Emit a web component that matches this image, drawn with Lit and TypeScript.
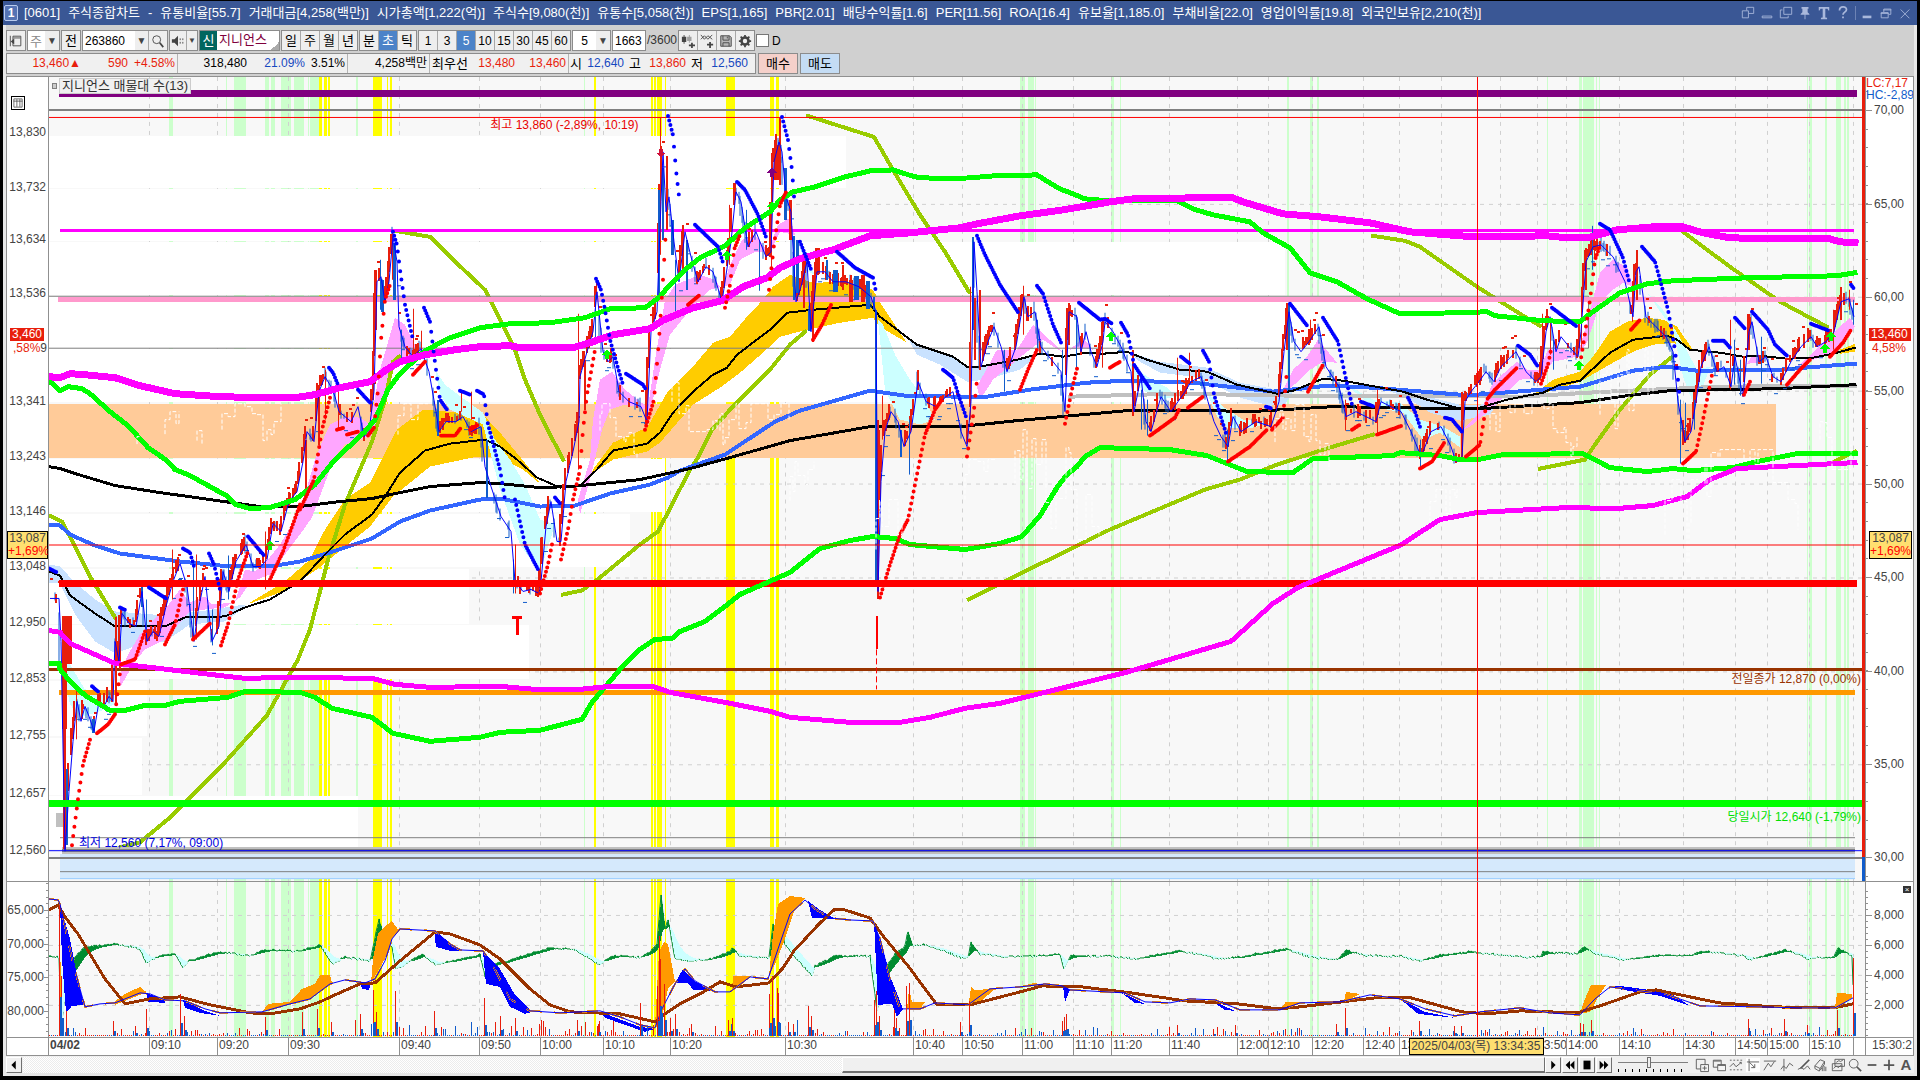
import { LitElement, html, svg, css } from "lit";
import { customElement, property } from "lit/decorators.js";

type Pt = [number, number];

/** Parses "x,y x,y ..." into points. */
const pts = (s: string): Pt[] =>
  s.trim().split(/\s+/).map((p) => p.split(",").map(Number) as Pt);

/** Linear interpolation of a point list at x. */
const at = (p: Pt[], x: number): number => {
  if (x <= p[0][0]) return p[0][1];
  for (let i = 1; i < p.length; i++) {
    if (x <= p[i][0]) {
      const [x0, y0] = p[i - 1];
      const [x1, y1] = p[i];
      return x1 === x0 ? y1 : y0 + ((y1 - y0) * (x - x0)) / (x1 - x0);
    }
  }
  return p[p.length - 1][1];
};

/** Small deterministic generator for tick noise. */
const rng = (seed: number) => () => {
  seed = (seed * 1664525 + 1013904223) % 4294967296;
  return seed / 4294967296;
};

const GREEN_BANDS: Pt[] = [
  [169, 4], [226, 1], [234, 12], [265, 4], [271, 4], [281, 10], [294, 10], [308, 1], [310, 9], [356, 2], [584, 1],
  [1020, 5], [1028, 6], [1035, 1], [1111, 3], [1120, 1], [1287, 2], [1310, 3], [1317, 2], [1547, 1], [1579, 3],
  [1583, 11], [1596, 1], [1599, 1], [1807, 1], [1809, 3], [1825, 2], [1836, 5], [1844, 2], [1847, 2],
];
const YELLOW_BANDS: Pt[] = [
  [319, 3], [324, 3], [328, 2], [373, 9], [387, 1], [390, 2], [594, 2], [651, 2], [654, 2], [657, 5], [665, 1],
  [726, 9], [770, 4], [776, 3],
];
const GRID_X = [
  149, 217, 288, 399, 479, 540, 603, 670, 785, 913, 962, 1022, 1073, 1111, 1169, 1237, 1268, 1312, 1363, 1399, 1441,
  1500, 1537, 1566, 1619, 1683, 1735, 1767, 1809, 1853,
];
const GRID_Y = [110, 204, 297, 391, 484, 578, 672, 765, 858];

/** Volume-at-price bars: top, bottom, right edge. */
const PROFILE = [
  [136, 188, 846], [189, 241, 793], [242, 295, 1285], [296, 348, 1588], [349, 402, 1240], [459, 512, 665],
  [514, 568, 630], [570, 625, 469], [626, 680, 529], [682, 737, 147], [739, 796, 142], [797, 850, 358],
];

const MA_TOP_MAGENTA =
  "49,377 60,378 70,374 85,375 115,378 140,386 175,394 220,397 260,398 295,398 315,395 340,388 370,382 385,371 400,362 425,355 455,350 480,347 510,346 520,348 573,348 593,342 613,335 650,329 662,321 693,308 722,301 743,287 767,278 780,268 800,259 833,250 870,236 910,233 960,228 977,224 1020,216 1063,210 1110,202 1133,199 1193,198 1233,198 1243,202 1283,214 1320,217 1370,223 1410,232 1460,236 1477,237 1547,236 1567,238 1587,238 1617,230 1653,227 1683,227 1703,233 1730,238 1780,239 1830,239 1840,242 1855,243";
const MA_TOP_GREEN =
  "49,381 60,391 68,387 82,389 90,394 110,412 128,426 148,448 167,461 175,470 190,476 228,497 236,505 250,509 270,508 295,500 315,485 335,460 365,432 375,420 388,390 400,374 425,351 450,338 480,328 510,324 550,323 585,318 610,309 645,308 660,297 668,287 685,270 700,258 725,246 745,228 770,212 780,200 793,192 815,187 845,177 870,171 893,170 915,177 940,179 970,178 993,176 1037,175 1048,182 1060,189 1073,194 1085,199 1110,201 1177,201 1193,209 1213,215 1250,222 1263,233 1290,248 1310,273 1337,282 1367,299 1400,314 1460,313 1487,312 1495,316 1543,321 1580,322 1590,314 1620,293 1647,284 1673,281 1747,278 1837,276 1855,273";
const MA_LOW_GREEN =
  "49,664 59,664 60,670 70,682 85,696 110,711 125,711 145,706 165,706 180,702 228,698 245,692 300,693 315,698 332,709 372,718 393,734 430,742 480,738 500,733 540,731 582,720 592,703 620,670 640,650 655,640 672,639 680,632 705,622 725,607 740,595 790,573 820,549 850,541 873,537 895,539 910,545 965,550 1000,544 1022,537 1040,516 1057,488 1067,475 1077,467 1085,457 1100,448 1170,450 1207,456 1247,472 1293,473 1313,459 1393,456 1400,453 1440,456 1460,460 1478,460 1503,455 1583,454 1610,468 1647,472 1673,469 1693,471 1733,468 1757,462 1797,454 1855,454";
const MA_LOW_MAGENTA =
  "49,631 60,633 70,644 115,664 150,668 210,675 245,679 290,678 372,679 395,685 430,688 500,687 535,690 580,690 610,687 653,687 670,693 725,703 770,712 790,718 850,723 900,723 930,718 965,709 1000,704 1053,691 1126,673 1231,642 1273,604 1298,588 1402,545 1426,529 1440,520 1477,513 1567,508 1617,509 1653,506 1687,497 1710,480 1737,469 1855,463";
const MA_BLUE =
  "49,525 60,526 70,535 95,546 120,554 180,562 230,567 270,567 300,562 330,553 372,539 400,522 430,511 480,500 500,499 540,507 575,506 610,494 650,485 668,478 680,471 725,455 775,422 800,411 870,391 905,396 960,397 987,397 1030,390 1087,383 1127,381 1193,383 1273,392 1327,386 1373,388 1460,395 1477,395 1580,387 1600,381 1633,371 1667,367 1697,371 1780,370 1855,364";
const MA_BLACK =
  "49,467 60,469 75,474 115,486 160,493 210,500 260,507 300,507 340,502 372,499 400,493 430,487 480,483 500,484 540,488 570,487 640,480 690,469 730,458 790,441 870,427 960,427 1017,421 1127,411 1213,411 1250,412 1333,407 1460,409 1480,409 1580,403 1627,396 1670,391 1780,389 1855,385";
const MA_GRAY = "1070,397 1177,394 1293,396 1440,396 1520,397 1607,392 1720,387 1855,386";
const MA_FAST_BLACK =
  "49,572 60,576 70,596 95,614 115,627 165,627 185,618 225,617 245,608 270,600 300,582 325,555 345,535 372,515 385,497 400,473 425,451 450,444 485,440 500,447 517,460 537,478 560,488 580,486 597,470 613,451 647,444 660,433 673,413 693,392 713,375 727,368 737,355 770,330 787,313 813,310 870,305 880,317 917,345 953,357 967,367 980,367 1017,360 1040,354 1063,357 1087,353 1103,354 1127,352 1147,360 1180,370 1207,372 1237,385 1277,394 1293,391 1323,379 1343,381 1403,392 1427,400 1460,409 1480,408 1507,400 1543,393 1560,385 1580,381 1610,353 1633,340 1667,336 1677,340 1690,350 1720,353 1743,357 1760,356 1787,359 1813,358 1833,354 1855,348";

const OLIVE = [
  "49,516 62,522 75,547 90,577 115,618",
  "120,848 140,843 168,820 225,763 267,716 298,660 310,630 320,592 328,560 345,505 372,442 385,400 393,362 399,357",
  "395,231 430,237 450,257 485,290 500,320 515,350 525,380 540,415 563,460",
  "563,595 582,591 600,578 640,545 658,532 672,505 690,470 698,458 712,430 730,410 750,390 770,370 790,345 805,332",
  "808,116 874,137 893,170 920,215 945,252 969,292",
  "969,600 1041,564 1110,530 1205,490 1240,480 1277,465 1333,447 1373,435",
  "1373,236 1405,241 1420,247 1477,287 1520,314 1540,326",
  "1540,469 1585,460 1595,445 1620,410 1650,375 1671,358",
  "1683,232 1730,267 1780,302 1827,327",
  "1830,464 1855,452",
];

const CLOUDS: [string, string][] = [
  ["cloud-blue", "49,565 60,567 75,583 95,600 115,612 165,616 200,612 245,605 245,608 225,622 190,625 165,642 140,645 115,654 95,642 75,615 60,584 49,583"],
  ["cloud-gold", "250,603 285,582 310,560 325,530 345,500 370,483 383,457 397,430 423,410 460,413 483,415 500,433 528,467 540,484 523,470 500,458 477,457 430,467 393,497 370,527 350,543 317,570 283,592 250,604"],
  ["cloud-gold", "585,483 595,467 613,443 647,428 667,393 693,367 713,343 730,337 747,317 763,300 773,287 790,275 813,283 847,282 873,290 880,303 907,343 880,327 873,318 840,323 807,330 780,337 763,353 740,373 720,388 693,405 660,443 647,452 613,460 595,472"],
  ["cloud-blue", "907,337 917,345 953,357 967,367 980,367 1017,360 1040,354 1020,370 985,380 967,382 940,365 917,355"],
  ["cloud-blue", "1127,352 1160,362 1207,368 1240,383 1277,390 1295,388 1285,405 1270,406 1240,398 1200,378 1160,373 1140,362"],
  ["cloud-blue", "1380,387 1420,395 1460,405 1480,405 1500,400 1490,415 1460,421 1430,413 1410,400"],
  ["cloud-gold", "1533,395 1553,380 1580,372 1593,357 1610,332 1627,322 1647,318 1663,320 1677,327 1693,350 1673,343 1653,345 1633,352 1613,363 1580,382 1553,391"],
  ["cloud-gold", "1840,350 1855,344 1855,352 1840,354"],
  ["cloud-pink", "120,675 128,655 140,635 152,622 165,610 180,590 190,603 205,597 212,605 235,603 245,570 255,572 268,560 280,545 300,512 315,460 323,440 330,425 345,417 360,418 370,425 380,370 395,318 405,325 415,345 425,350 425,358 400,357 390,378 375,430 370,437 345,445 335,457 325,483 312,518 300,535 290,548 270,575 250,583 240,598 225,608 205,610 190,612 165,640 145,650 135,662 120,688"],
  ["cloud-pink", "578,500 590,460 593,420 600,380 612,372 625,390 648,408 655,360 665,300 675,285 700,275 715,280 722,290 730,265 742,240 755,235 768,252 778,225 790,218 795,235 780,232 770,252 755,252 740,260 730,285 710,290 690,310 670,335 660,370 650,412 640,408 625,405 610,410 602,430 590,480 580,515"],
  ["cloud-pink", "977,387 997,350 1017,350 1033,325 1053,343 1063,353 1043,340 1027,352 993,380 980,400"],
  ["cloud-pink", "1070,350 1083,338 1093,350 1083,348"],
  ["cloud-pink", "1283,390 1293,370 1307,357 1318,340 1337,363 1323,362 1310,370 1287,392"],
  ["cloud-pink", "1463,430 1480,413 1493,383 1517,362 1527,370 1540,370 1548,350 1553,347 1578,353 1583,337 1600,273 1613,260 1627,267 1633,287 1623,283 1613,290 1600,303 1587,343 1577,357 1553,362 1540,378 1520,380 1493,408 1470,427"],
  ["cloud-pink", "1747,364 1753,355 1762,363"],
  ["cloud-pink", "1797,367 1813,353 1833,333 1850,318 1855,327 1837,352 1813,360"],
  ["cloud-cyan", "62,660 70,665 85,690 110,695 115,705 100,712 80,718 70,705 65,680"],
  ["cloud-cyan", "435,370 445,385 465,400 483,413 495,440 510,460 525,485 540,520 555,525 540,573 520,545 500,490 483,425 450,410 440,395"],
  ["cloud-cyan", "878,320 883,325 895,355 910,380 925,400 935,420 920,425 900,420 885,390"],
  ["cloud-cyan", "800,245 815,275 805,270"],
  ["cloud-cyan", "1130,363 1147,377 1167,388 1177,397 1160,400 1147,393 1133,383"],
  ["cloud-cyan", "1207,393 1223,407 1243,420 1270,423 1253,428 1227,428 1217,417"],
  ["cloud-cyan", "1343,383 1373,400 1400,403 1420,420 1443,427 1460,437 1460,448 1440,433 1423,440 1403,413 1373,407"],
  ["cloud-cyan", "1647,293 1663,310 1677,333 1697,370 1710,367 1703,387 1693,403 1683,377 1673,330"],
];

const PRICE = pts(
  "49,597 58,597 60,640 64,850 68,790 72,740 76,700 80,720 84,705 88,715 93,730 98,700 103,705 108,695 112,700 114,640 118,660 121,612 128,622 135,625 141,590 146,640 152,630 158,635 165,605 172,580 179,562 186,585 193,640 197,610 204,575 211,640 218,625 222,570 228,590 235,560 245,543 252,565 260,565 266,558 272,522 280,530 288,500 296,490 302,460 306,430 313,440 318,390 324,375 330,385 334,395 338,410 344,415 350,420 357,405 363,435 368,430 373,390 376,280 380,275 384,300 388,280 392,235 396,260 398,325 404,345 412,355 420,347 428,370 435,410 438,430 445,420 455,420 462,415 470,430 480,425 484,465 490,485 500,515 510,530 514,580 522,590 530,588 538,592 540,580 545,525 550,500 556,540 560,540 565,480 572,450 578,420 579,375 586,350 592,330 596,290 602,350 607,360 612,355 618,390 628,400 640,405 646,420 650,330 656,310 660,200 662,150 665,210 668,195 673,240 678,280 684,230 690,255 697,280 705,265 712,270 721,300 730,240 735,190 740,200 747,245 755,230 765,255 770,250 773,160 778,140 781,150 785,195 790,210 795,300 800,285 806,260 810,330 816,270 824,270 832,280 845,280 858,285 870,295 875,310 877,590 880,480 884,430 890,410 897,420 903,445 910,430 917,380 925,400 935,405 945,395 952,390 960,430 966,445 970,400 973,240 976,290 980,365 987,340 993,325 1000,345 1006,370 1015,345 1023,295 1027,315 1034,310 1040,345 1048,355 1060,370 1064,410 1068,310 1076,315 1080,350 1085,330 1090,350 1096,365 1102,340 1104,320 1112,330 1120,345 1130,370 1133,410 1140,375 1145,420 1150,430 1160,395 1170,410 1177,400 1184,390 1190,380 1200,375 1207,400 1213,420 1220,435 1227,445 1232,415 1240,430 1255,420 1270,425 1278,400 1283,350 1288,310 1293,340 1300,350 1308,340 1318,325 1325,365 1338,385 1345,415 1355,410 1365,415 1375,420 1380,400 1390,405 1400,410 1410,430 1420,455 1430,430 1440,425 1450,445 1455,460 1461,455 1464,400 1470,390 1478,380 1485,370 1493,380 1500,365 1515,350 1525,370 1535,380 1540,375 1545,330 1549,315 1555,350 1560,335 1568,345 1577,355 1580,330 1585,260 1592,245 1600,243 1612,255 1624,280 1632,315 1635,270 1638,265 1645,315 1655,325 1665,335 1672,350 1677,400 1684,440 1690,430 1695,400 1700,365 1708,345 1716,370 1723,365 1730,385 1734,355 1742,395 1748,330 1751,320 1758,360 1765,355 1772,375 1780,380 1790,360 1800,345 1810,335 1816,345 1825,340 1833,330 1840,300 1848,297 1853,315",
);

/** Single long wicks: x, top, bottom, rising (1) or falling (0), width. */
const WICKS = [
  [66, 617, 665, 1, 10], [64, 620, 730, 1, 5], [64, 700, 850, 1, 3], [66, 770, 846, 0, 2], [76, 688, 740, 1, 1],
  [93, 720, 734, 0, 3], [115, 618, 705, 1, 2], [119, 640, 670, 1, 2], [141, 583, 608, 0, 2], [146, 600, 640, 0, 1],
  [172, 550, 600, 1, 1], [193, 560, 640, 0, 1], [196, 555, 640, 1, 1], [212, 610, 646, 0, 1], [228, 556, 600, 0, 1],
  [265, 532, 590, 1, 1], [305, 440, 490, 1, 2], [318, 385, 445, 1, 2], [325, 370, 420, 1, 1], [338, 390, 430, 1, 1],
  [375, 270, 330, 1, 3], [380, 260, 310, 0, 1], [382, 280, 312, 0, 3], [392, 232, 280, 1, 1], [394, 243, 300, 0, 3],
  [401, 330, 364, 0, 1], [413, 309, 355, 1, 1], [421, 331, 350, 1, 1], [461, 390, 412, 1, 1], [437, 400, 436, 0, 2],
  [471, 392, 420, 1, 1], [486, 440, 498, 0, 2], [513, 560, 594, 0, 1], [515, 545, 594, 1, 1], [540, 538, 594, 1, 1],
  [578, 314, 470, 1, 1], [584, 360, 410, 1, 2], [596, 279, 300, 1, 1], [595, 295, 340, 0, 1], [647, 391, 420, 1, 1],
  [658, 190, 300, 0, 2], [660, 118, 255, 1, 1], [662, 168, 240, 0, 2], [666, 156, 230, 1, 2], [672, 220, 255, 0, 3],
  [682, 225, 270, 1, 2], [686, 240, 290, 0, 2], [675, 260, 313, 0, 1], [729, 205, 265, 1, 1], [734, 183, 200, 1, 3],
  [746, 210, 250, 0, 1], [759, 240, 291, 0, 1], [771, 160, 275, 1, 1], [776, 145, 180, 1, 6], [779, 118, 185, 1, 2],
  [785, 168, 220, 0, 3], [790, 200, 240, 1, 3], [793, 236, 300, 0, 2], [797, 240, 293, 0, 3], [803, 265, 308, 1, 2],
  [809, 310, 331, 0, 3], [812, 275, 342, 1, 2], [817, 248, 274, 1, 5], [826, 260, 280, 0, 2], [835, 270, 292, 0, 5],
  [842, 265, 290, 1, 2], [850, 280, 302, 1, 4], [856, 276, 300, 0, 5], [862, 275, 302, 1, 4], [867, 281, 309, 0, 4],
  [873, 297, 310, 0, 2], [875, 310, 585, 0, 2], [877, 420, 600, 1, 2], [878, 430, 500, 1, 2], [882, 396, 440, 1, 1],
  [900, 430, 457, 0, 2], [917, 370, 390, 1, 2], [909, 420, 475, 0, 1], [970, 287, 420, 1, 1], [972, 237, 330, 0, 2],
  [974, 298, 360, 1, 2], [979, 290, 370, 1, 2], [1004, 350, 392, 0, 1], [1023, 286, 335, 1, 1], [1037, 320, 352, 0, 1],
  [1062, 350, 402, 0, 1], [1068, 303, 345, 1, 2], [1076, 315, 370, 0, 1], [1102, 320, 368, 1, 1], [1132, 350, 413, 1, 2],
  [1141, 390, 430, 0, 1], [1147, 400, 436, 0, 1], [1189, 353, 380, 1, 1], [1177, 358, 400, 1, 1], [1227, 430, 465, 0, 1],
  [1286, 303, 350, 1, 2], [1288, 303, 390, 0, 2], [1310, 320, 340, 1, 1], [1345, 400, 431, 1, 1], [1377, 390, 436, 1, 1],
  [1420, 440, 468, 0, 1], [1461, 392, 460, 1, 2], [1542, 314, 375, 1, 1], [1550, 320, 355, 1, 1], [1553, 340, 370, 0, 1],
  [1581, 287, 350, 1, 1], [1585, 248, 290, 1, 2], [1592, 226, 270, 0, 1], [1594, 232, 258, 1, 1], [1632, 290, 322, 1, 1],
  [1636, 250, 300, 1, 2], [1680, 400, 464, 0, 1], [1682, 420, 445, 1, 2], [1685, 403, 440, 0, 1], [1694, 400, 430, 0, 1],
  [1730, 320, 390, 1, 1], [1734, 340, 385, 0, 1], [1740, 360, 396, 0, 1], [1748, 314, 350, 1, 3], [1761, 337, 384, 0, 1],
  [1833, 310, 350, 1, 1], [1840, 287, 320, 1, 2], [1849, 290, 310, 1, 1], [1853, 300, 325, 0, 1],
];

const SAR_RED = [
  "72,846 78,800 83,765 91,737", "97,734 108,725 115,715 121,665 135,660 145,632", "165,645 175,625 183,590",
  "193,640 210,624", "221,646 228,625 238,580 248,552", "270,580 283,552 300,505", "300,510 314,480 318,455 322,430 330,398",
  "337,430 344,428", "347,435 358,432", "368,436 374,428 378,390 381,340 385,300 390,285", "413,375 425,362",
  "441,436 455,436 461,428", "470,430 478,425", "540,594 548,565 553,540", "561,560 568,530 573,500 580,470 583,430 587,395 595,350",
  "645,430 654,400 659,340 663,280 666,230", "688,305 700,295", "725,308 730,285 734,250 740,235",
  "769,290 774,245 780,205 787,190", "813,340 822,325 832,303", "880,598 890,565 900,535 908,520 918,470 925,435 935,410 942,400",
  "967,457 974,410 977,380", "1020,390 1028,370 1037,350", "1065,424 1073,385 1078,365", "1110,368 1120,362",
  "1150,436 1175,418 1180,408", "1188,408 1203,397", "1228,462 1250,447 1267,430", "1272,430 1283,418 1287,370",
  "1308,392 1323,365", "1352,430 1360,425", "1377,435 1402,426", "1420,469 1432,462 1445,442",
  "1466,457 1480,445 1487,400 1495,390 1517,368", "1541,384 1548,365 1551,350", "1580,365 1584,340 1590,300 1595,260 1600,246",
  "1631,330 1640,320", "1683,464 1696,452 1703,420 1712,375", "1744,395 1751,380", "1787,385 1800,370 1810,360",
  "1830,357 1843,343 1851,330",
];
const SAR_BLUE = [
  "49,569 57,573", "92,687 99,693", "120,608 126,611", "149,588 166,599", "183,549 190,553 194,567", "209,554 214,565 220,590",
  "248,537 264,556", "329,368 333,373 338,385", "358,390 371,404", "393,232 397,245 400,270 405,305 413,340",
  "424,308 430,322 434,355 440,400 447,410", "460,391 470,395", "477,391 484,395 488,425 500,470 505,500",
  "515,500 525,545 538,570", "555,498 560,504", "596,279 601,290 605,310 610,340 617,365 623,385", "626,374 643,385 646,390",
  "668,116 673,135 676,170 680,205", "695,225 718,247 723,263", "737,182 745,190 758,215 767,240",
  "782,117 788,140 792,170 795,210", "800,242 812,272", "837,252 855,268 873,278 876,292", "943,370 953,378 960,400 967,420",
  "977,236 985,255 1000,285 1019,314", "1037,286 1043,294 1053,325 1062,345", "1079,303 1100,320 1105,319 1112,324",
  "1121,323 1128,335 1134,365 1150,389", "1181,357 1190,364", "1203,351 1209,362 1214,395 1227,437", "1266,407 1272,409",
  "1290,304 1308,327", "1323,318 1338,342 1345,375 1352,405", "1361,402 1374,407", "1408,398 1415,412 1421,430",
  "1445,418 1452,420 1462,432", "1518,346 1530,355 1538,367", "1552,308 1577,327", "1600,224 1610,230 1623,258 1630,285",
  "1642,247 1655,262 1660,280 1668,310 1675,350 1680,400", "1713,341 1724,341 1730,348", "1735,318 1745,329",
  "1752,312 1768,330 1775,345 1788,357", "1811,324 1829,331", "1851,285 1854,289",
];

const dots = (segments: string[]) =>
  segments
    .map((s) => {
      const p = pts(s);
      let d = "";
      for (let x = p[0][0]; x <= p[p.length - 1][0]; x += 1.2) d += `M${x.toFixed(1)} ${at(p, x).toFixed(1)}h0`;
      return d;
    })
    .join("");

const candles = () => {
  const r = rng(7);
  let up = "";
  let down = "";
  for (let x = 50; x < 1855; x += 1.5) {
    const y = at(PRICE, x);
    const slope = at(PRICE, x + 1.5) - y;
    const rise = slope + (r() - 0.5) * 5 < 0.4;
    const a = Math.min(y, y + slope) - 1 - r() * 7;
    const b = Math.max(y, y + slope) + 1 + r() * 6;
    const seg = `M${Math.round(x)} ${Math.round(a)}V${Math.round(b)}`;
    const keep = r();
    if (rise && keep < 0.75) up += seg;
    else if (!rise && keep < 0.5) down += seg;
    if (r() < 0.12) up += `M${Math.round(x)} ${Math.round(y - 8 - r() * 10)}h3`;
    if (r() < 0.12) down += `M${Math.round(x)} ${Math.round(y + 8 + r() * 10)}h4`;
  }
  return { up, down };
};

/** Faint dashed volume trace shown over the filled profile bar. */
const whiteTrace = (from: number, to: number, lo: number, hi: number, seed: number) => {
  const r = rng(seed);
  let y = (lo + hi) / 2;
  let d = `M${from} ${y}`;
  for (let x = from; x < to; x += 2 + Math.round(r() * 6)) {
    y = Math.max(lo, Math.min(hi, y + (r() - 0.5) * (hi - lo) * 1.2));
    d += `H${x}V${Math.round(y)}`;
  }
  return d;
};
const TRACES = [
  [137, 144, 432, 457, 1], [165, 184, 412, 457, 2], [197, 206, 425, 457, 3], [222, 284, 404, 456, 4], [398, 432, 404, 466, 5],
  [600, 640, 404, 458, 8], [672, 720, 372, 432, 6], [720, 795, 404, 458, 9], [790, 816, 462, 540, 10], [876, 912, 500, 600, 11],
  [965, 1000, 460, 540, 12], [1015, 1110, 430, 540, 13], [1275, 1330, 405, 480, 14], [1430, 1465, 490, 555, 15],
  [1490, 1580, 404, 457, 16], [1600, 1660, 350, 480, 17], [1665, 1700, 480, 590, 18], [1705, 1800, 450, 530, 19],
  [1820, 1852, 410, 470, 20],
];

const LOWER_BROWN =
  "49,911 58,906 65,918 78,935 90,955 105,980 125,1005 150,1000 180,998 210,1006 250,1014 270,1015 300,1010 320,1003 335,996 360,985 375,984 400,962 435,933 450,935 480,946 500,960 530,990 550,1006 570,1013 620,1015 655,1023 665,1015 680,1005 700,995 720,983 736,988 769,984 783,969 794,952 819,925 834,911 845,911 870,919 883,937 908,967 937,1006 970,1006 1024,992 1042,987 1082,988 1131,994 1185,1002 1238,1005 1278,1010 1300,1008 1375,999 1411,999 1462,1013 1486,1015 1521,1012 1577,1014 1600,1007 1640,993 1656,991 1719,1004 1774,1008 1834,1009 1853,1005";
const LOWER_BLUE =
  "49,900 58,901 60,905 72,960 80,990 85,1008 100,1005 115,1004 140,994 150,995 165,1001 185,1002 205,1010 220,1014 262,1013 290,1005 310,1000 330,985 345,981 365,984 375,980 385,962 392,940 400,930 435,932 450,945 460,951 483,952 492,965 510,1000 530,1012 560,1014 600,1012 620,1018 640,1026 655,1029 662,1010 675,985 685,970 695,982 715,993 730,993 750,978 768,980 778,950 790,915 805,901 815,910 830,919 850,921 873,922 880,940 890,980 900,1010 920,1010 935,1004 968,1006 990,990 1020,988 1045,985 1062,987 1070,991 1125,994 1145,1003 1170,1004 1190,1000 1215,1001 1240,1011 1280,1011 1300,1004 1340,1003 1370,996 1400,1000 1425,1010 1455,1017 1480,1013 1520,1009 1550,1014 1580,1016 1595,1000 1610,988 1640,992 1665,995 1700,1007 1760,1008 1800,1009 1835,1009 1853,999";
const LOWER_AREAS: [string, string][] = [
  ["area-blue", "60,905 70,940 78,982 84,1006 72,1007 66,1014 62,960"],
  ["area-blue", "146,994 165,1001 165,1004 148,1003"],
  ["area-blue", "183,1001 205,1012 220,1017 200,1014 185,1009"],
  ["area-blue", "434,931 445,940 460,952 450,952 436,948"],
  ["area-blue", "483,953 500,970 515,996 533,1013 525,1015 510,1008 500,988 486,985"],
  ["area-blue", "360,984 371,984 369,991 362,990"],
  ["area-blue", "600,1013 640,1028 655,1030 645,1033 605,1019"],
  ["area-blue", "675,984 683,970 694,982 712,992 693,991 688,984"],
  ["area-blue", "808,902 820,911 835,920 812,919"],
  ["area-blue", "874,922 883,950 890,977 903,1010 897,1018 892,1005 878,1006"],
  ["area-blue", "1063,987 1070,991 1065,1003"],
  ["area-blue", "1120,993 1145,1005 1135,1004"],
  ["area-blue", "1210,1001 1235,1012 1225,1011"],
  ["area-blue", "1400,1000 1425,1013 1455,1019 1418,1015"],
  ["area-blue", "1605,988 1620,987 1670,994 1690,1007 1660,997"],
  ["area-orange", "59,905 62,1020 60,1020"],
  ["area-orange", "113,1004 125,995 140,988 146,993 140,996 115,1006"],
  ["area-orange", "262,1013 268,1005 290,1003 302,990 315,985 320,976 330,976 332,984 310,1001"],
  ["area-orange", "371,984 373,960 378,935 384,928 392,922 399,932 392,940 385,960"],
  ["area-orange", "655,1028 659,953 664,943 668,945 675,983 668,990 660,1028"],
  ["area-orange", "732,992 733,977 752,977 740,987"],
  ["area-orange", "769,978 773,935 778,905 790,897 806,899 795,910 785,940 775,965"],
  ["area-orange", "907,1010 909,990 912,1003 925,1003 920,1010"],
  ["area-orange", "969,1003 971,988 975,991 995,990 980,1003"],
  ["area-orange", "1018,988 1035,984 1045,987"],
  ["area-orange", "1280,1010 1286,1003 1300,1003"],
  ["area-orange", "1344,1003 1346,993 1360,995"],
  ["area-orange", "1580,1015 1585,1000 1591,986 1606,986 1600,995 1590,1013"],
  ["area-orange", "1835,1009 1837,994 1852,995 1853,1013 1852,999"],
];
const STRENGTH = pts(
  "49,958 59,958 61,1030 66,985 75,958 85,948 115,945 140,950 146,964 160,957 175,955 183,969 190,961 220,953 250,957 265,951 300,952 320,946 332,965 345,958 370,962 379,920 386,945 392,948 396,971 410,962 422,955 435,966 480,956 485,977 495,965 520,958 550,949 575,951 600,966 612,957 640,958 650,953 657,945 661,897 665,930 668,920 675,960 690,962 712,960 730,952 732,949 740,957 769,959 773,925 776,940 778,912 785,945 795,958 812,977 815,967 835,957 870,957 877,1012 884,970 895,955 905,947 908,932 912,946 925,946 955,956 964,960 968,958 971,944 980,955 1005,958 1060,956 1064,970 1070,957 1110,957 1135,960 1177,952 1210,957 1214,960 1235,959 1286,950 1310,958 1338,961 1346,951 1365,957 1400,957 1420,962 1440,956 1470,953 1520,958 1540,958 1543,953 1577,955 1584,947 1595,955 1625,961 1660,956 1690,957 1700,952 1745,957 1750,961 1785,951 1800,956 1808,960 1834,958 1838,949 1848,955 1852,958 1853,985",
);

const strengthArea = () => {
  const r = rng(21);
  let avg = 958;
  let hi = "";
  let lo = "";
  let line = "";
  for (let x = 49; x < 1854; x++) {
    const raw = at(STRENGTH, x) + (r() - 0.5) * 2;
    avg += (raw - avg) * 0.11;
    const seg = `M${x}.5 ${Math.round(raw)}V${Math.round(avg)}`;
    if (raw < avg) hi += seg;
    else lo += seg;
    line += `${x === 49 ? "M" : "L"}${x} ${Math.round(raw)}`;
  }
  return { hi, lo, line };
};

const VOLUME_PEAKS: Pt[] = [
  [59, 131], [61, 60], [66, 25], [113, 15], [135, 10], [146, 27], [180, 42], [184, 20], [265, 19], [302, 24], [317, 27],
  [331, 14], [360, 22], [373, 46], [376, 24], [395, 45], [434, 25], [484, 38], [500, 20], [515, 18], [577, 16], [598, 12],
  [640, 33], [657, 50], [659, 100], [660, 77], [664, 52], [670, 18], [675, 22], [691, 12], [728, 16], [732, 18], [769, 42],
  [772, 60], [777, 48], [778, 43], [788, 14], [793, 12], [808, 30], [811, 20], [874, 36], [876, 45], [879, 20], [894, 26],
  [896, 18], [906, 50], [909, 53], [960, 14], [969, 35], [1062, 15], [1064, 19], [1066, 22], [1177, 11], [1213, 7],
  [1235, 11], [1336, 12], [1345, 28], [1419, 15], [1454, 10], [1461, 10], [1580, 13], [1583, 12], [1591, 16], [1748, 17],
  [1784, 17], [1807, 11], [1837, 26], [1853, 78],
];
const volume = () => {
  const r = rng(33);
  let up = "";
  let down = "";
  for (let x = 49; x < 1855; x += 2) {
    const busy = x < 120 || (x > 340 && x < 560) || (x > 560 && x < 800);
    const h = 1 + Math.floor(Math.pow(r(), 6) * (busy ? 16 : 9));
    const seg = `M${x} 1037v${-h}h1v${h}z`;
    if (r() < 0.55) up += seg;
    else down += seg;
  }
  for (const [x, h] of VOLUME_PEAKS) {
    up += `M${x} 1037v${-h}h1v${h}z`;
    down += `M${x + 1} 1037v${-Math.round(h * 0.3)}h2v${Math.round(h * 0.3)}z`;
  }
  return { up, down };
};

const bands = (top: number, bottom: number) => svg`
  ${GREEN_BANDS.map(([x, w]) => svg`<rect class="band-green" x=${x} y=${top} width=${w} height=${bottom - top}></rect>`)}
  ${YELLOW_BANDS.map(([x, w]) => svg`<rect class="band-yellow" x=${x} y=${top} width=${w} height=${bottom - top}></rect>`)}
  ${GRID_X.map((x) => svg`<path class="grid" d="M${x}.5 ${top}V${bottom}"></path>`)}`;

const arrow = (x: number, y: number, cls: string, flip = false) => svg`
  <path class=${cls} transform="translate(${x} ${y})${flip ? " scale(1 -1)" : ""}" d="M0 -5L5 0H2V4H-2V0H-5Z"></path>`;

@customElement("price-chart")
export class PriceChart extends LitElement {
  static styles = css`
    :host { display: block; min-width: 0; min-height: 0; position: relative; overflow: hidden; background: #f8f8f8; }
    svg { display: block; width: 100%; height: 100%; shape-rendering: crispEdges; }
    path, polyline { fill: none; }
    .grid { stroke: #d0d0d0; stroke-dasharray: 4 5; }
    .band-green { fill: #ccffcc; }
    .band-yellow { fill: #ffff00; }
    .profile { fill: #fff; }
    .profile-max { fill: #ffcb99; }
    .zone { fill: #d5e9fc; }
    .cloud-blue { fill: #c9e2ff; }
    .cloud-gold { fill: #ffcc00; }
    .cloud-pink { fill: #ffa6ff; }
    .cloud-cyan { fill: #ccffff; }
    .trace { stroke: #fff; stroke-dasharray: 4 2; }
    .ln { stroke-linejoin: round; stroke-linecap: square; }
    .w1 { stroke-width: 1; }
    .w2 { stroke-width: 2; }
    .w3 { stroke-width: 3; }
    .w4 { stroke-width: 4; }
    .w5 { stroke-width: 5; }
    .w6 { stroke-width: 6; }
    .w7 { stroke-width: 7; }
    .c-purple { stroke: #800080; }
    .c-gray { stroke: #808080; }
    .c-silver { stroke: #c0c0c0; }
    .c-red { stroke: #ff0000; }
    .c-magenta { stroke: #ff00ff; }
    .c-pink { stroke: #ff99cc; }
    .c-brown { stroke: #993300; }
    .c-orange { stroke: #ff9900; }
    .c-green { stroke: #00ff00; }
    .c-blue { stroke: #0000ff; }
    .c-sky { stroke: #99ccff; }
    .c-royal { stroke: #3366ff; }
    .c-black { stroke: #000; }
    .c-olive { stroke: #99cc00; }
    .c-up { stroke: #e81e0c; }
    .c-down { stroke: #115ccb; }
    .dot { stroke-width: 4; stroke-linecap: round; shape-rendering: auto; }
    path.mark-green { fill: #00ff00; }
    path.mark-red { fill: #d0103a; }
    path.mark-purple { fill: #800080; }
    .note { position: absolute; font-size: 12px; line-height: 16px; white-space: nowrap; transform: translateY(-50%); }
    .high { left: 24.3%; top: 6%; color: #e80000; }
    .low { left: 30px; top: 95.2%; color: #0000e0; }
    .prev { right: 4px; top: 74.8%; color: #993300; }
    .open { right: 4px; top: 92%; color: #00e000; }
    .legend { position: absolute; left: 3px; top: 1px; display: flex; align-items: center; gap: 2px; font-size: 13px; line-height: 14px; color: #333; }
    .legend i { width: 3px; height: 4px; border: 1px solid #808080; background: #ccc; }
    .legend span { border: 1px solid #ccc; background: #f0f0f0; padding: 0 2px; white-space: nowrap; }
  `;
  render() {
    const c = candles();
    const line = (cls: string, p: string) => svg`<polyline class="ln ${cls}" points=${p}></polyline>`;
    return html`
      <svg viewBox="49 77 1816 805" preserveAspectRatio="none" aria-hidden="true">
        ${bands(77, 882)}
        ${GRID_Y.map((y) => svg`<path class="grid" d="M49 ${y}.5H1862"></path>`)}
        ${PROFILE.map(([t, b, r]) => svg`<rect class="profile" x="49" y=${t} width=${r - 49} height=${b - t}></rect>`)}
        <rect class="profile-max" x="49" y="404" width="1727" height="54"></rect>
        <rect class="zone" x="60" y="855" width="1795" height="25"></rect>
        ${CLOUDS.map(([cls, p]) => svg`<polygon class=${cls} points=${p}></polygon>`)}
        ${line("w4 c-silver", MA_GRAY)}
        ${OLIVE.map((p) => line("w4 c-olive", p))}
        <path class="w7 c-purple" d="M59 93.5H1857"></path>
        <path class="w2 c-gray" d="M49 110H1862M49 859H1862"></path>
        <path class="w1 c-gray" d="M49 296.5H1588.5V348.5H49M60 838.5H1855M60 872.5H1855"></path>
        <path class="w1 c-red" d="M49 117.5H1862"></path>
        <path class="w3 c-magenta" d="M60 230.5H1854"></path>
        <path class="w5 c-pink" d="M58 299.5H1855"></path>
        <path class="w7 c-silver" d="M62 851.5H1855M59.5 814V828"></path>
        <path class="w3 c-gray" d="M62 851.5H1855"></path>
        <path class="w1 c-blue" d="M49 851.5H1862"></path>
        <path class="w1 c-sky" d="M60 879.5H1855"></path>
        <path class="w3 c-brown" d="M49 670.5H1862"></path>
        <path class="w5 c-orange" d="M59 693.5H1855"></path>
        ${line("w4 c-royal", MA_BLUE)}
        ${line("w3 c-black", MA_BLACK)}
        ${line("w2 c-black", MA_FAST_BLACK)}
        <path class="w1 c-down" d=${c.down}></path>
        <path class="w2 c-up" d=${c.up}></path>
        ${WICKS.map(([x, a, b, up, w]) => svg`<path class=${up ? "c-up" : "c-down"} stroke-width=${w} d="M${x + 0.5} ${a}V${b}"></path>`)}
        <path class="w3 c-red" d="M512 618H522M517.5 618V636"></path>
        <path class="w2 c-red" d="M877 617V650"></path>
        <path class="w1 c-red" stroke-dasharray="6 3" d="M876.5 650V690"></path>
        <polyline class="w1 c-blue" points=${PRICE.map(([x, y]) => `${x + 1},${y + 2}`).join(" ")}></polyline>
        <path class="w7 c-red" d="M59 584.5H1857"></path>
        <path class="w7 c-green" d="M49 804.5H1862"></path>
        ${line("w5 c-green", MA_LOW_GREEN)}
        ${line("w5 c-magenta", MA_LOW_MAGENTA)}
        ${line("w5 c-green", MA_TOP_GREEN)}
        ${line("w7 c-magenta", MA_TOP_MAGENTA)}
        <path class="dot c-red" d=${dots(SAR_RED)}></path>
        <path class="dot c-blue" d=${dots(SAR_BLUE)}></path>
        ${TRACES.map(([a, b, lo, hi, s]) => svg`<path class="trace" d=${whiteTrace(a, b, lo, hi, s)}></path>`)}
        ${[[270, 546], [607, 355], [727, 256], [772, 207], [1111, 337], [1579, 366], [1825, 349], [1831, 337]].map(([x, y]) => arrow(x, y, "mark-green"))}
        ${arrow(661, 153, "mark-red", true)} ${arrow(772, 173, "mark-purple")}
        <path class="w1 c-red" d="M49 545.5H1862M1477.5 77V882"></path>
        <path class="w3 c-up" d="M1863.5 77V858"></path>
        <path class="w3 c-down" d="M1863.5 858V882"></path>
      </svg>
      <div class="legend"><i></i><span>지니언스 매물대 수(13)</span></div>
      <div class="note high">최고 13,860 (-2,89%, 10:19)</div>
      <div class="note low">최저 12,560 (7,17%, 09:00)</div>
      <div class="note prev">전일종가 12,870 (0,00%)</div>
      <div class="note open">당일시가 12,640 (-1,79%)</div>
    `;
  }
}

@customElement("volume-chart")
export class VolumeChart extends LitElement {
  static styles = css`
    :host { display: block; min-width: 0; min-height: 0; overflow: hidden; background: #f8f8f8; }
    svg { display: block; width: 100%; height: 100%; shape-rendering: crispEdges; }
    path, polyline { fill: none; }
    .grid { stroke: #d0d0d0; stroke-dasharray: 4 5; }
    .band-green { fill: #ccffcc; }
    .band-yellow { fill: #ffff00; }
    .area-blue { fill: #0000ff; }
    .area-orange { fill: #ff9900; }
    .strong { stroke: #008c30; }
    .weak { stroke: #ccffff; }
    .trend { stroke: #993300; stroke-width: 3; }
    .under { stroke: #ff9900; stroke-width: 2; }
    .mean { stroke: #0000ff; }
    path.up { fill: #e81e0c; }
    path.down { fill: #115ccb; }
    .cross { stroke: #ff0000; }
  `;
  render() {
    const s = strengthArea();
    const v = volume();
    return html`
      <svg viewBox="49 883 1816 155" preserveAspectRatio="none" aria-hidden="true">
        ${bands(883, 1038)}
        ${[916, 946, 976, 1006].map((y) => svg`<path class="grid" d="M49 ${y}.5H1865"></path>`)}
        <path class="strong" d=${s.line}></path>
        <path class="weak" d=${s.lo}></path>
        <path class="strong" d=${s.hi}></path>
        ${LOWER_AREAS.map(([cls, p]) => svg`<polygon class=${cls} points=${p}></polygon>`)}
        <polyline class="trend" points=${LOWER_BROWN}></polyline>
        <polyline class="under" stroke-dasharray="16 12" points=${LOWER_BLUE}></polyline>
        <polyline class="mean" points=${LOWER_BLUE}></polyline>
        <path class="up" d=${v.up}></path>
        <path class="down" d=${v.down}></path>
        <path class="cross" d="M1477.5 883V1038"></path>
      </svg>
    `;
  }
}

const LEFT_PRICES: [string, number][] = [
  ["13,830", 132], ["13,732", 187], ["13,634", 239], ["13,536", 293], ["13,341", 401], ["13,243", 456], ["13,146", 511],
  ["13,048", 567], ["12,950", 623], ["12,853", 679], ["12,755", 736], ["12,657", 794], ["12,560", 851],
];
const LEFT_LOWER: [string, number][] = [["65,000", 911], ["70,000", 945], ["75,000", 978], ["80,000", 1012]];
const RIGHT_RATES: [string, number][] = GRID_Y.map((y, i) => [`${70 - i * 5},00`, y]);
const RIGHT_LOWER: [string, number][] = [["8,000", 916], ["6,000", 946], ["4,000", 976], ["2,000", 1006]];

@customElement("value-axis")
export class ValueAxis extends LitElement {
  @property({ attribute: false }) labels: [string, number][] = [];
  @property({ type: Number }) top = 77;
  @property({ type: Number }) span = 805;
  @property({ type: Number }) minor = 0;
  @property({ type: Boolean, reflect: true }) right = false;
  static styles = css`
    :host { display: block; position: relative; min-height: 0; overflow: hidden; background: #fff; color: #444; font-size: 12px; line-height: 16px; }
    .lab { position: absolute; right: 2px; transform: translateY(-50%); }
    .lab.inset { right: 4px; }
    :host([right]) .lab { right: auto; left: 8px; }
    .tick { position: absolute; right: 0; width: 2px; height: 1px; background: #909090; }
    :host([right]) .tick { right: auto; left: 0; }
    .tick.major { width: 4px; }
    :host([right]) .tick.major { width: 6px; }
  `;
  render() {
    const pos = (y: number) => `top:${((y - this.top) / this.span) * 100}%`;
    const minors: number[] = [];
    if (this.minor) for (let y = this.labels[0][1] - this.minor * 4; y < this.top + this.span; y += this.minor) minors.push(y);
    return html`
      ${minors.map((y) => html`<i class="tick" style=${pos(y)}></i>`)}
      ${this.labels.map(([t, y]) => html`
        ${this.minor ? html`<i class="tick major" style=${pos(y)}></i>` : ""}
        <span class="lab ${this.minor ? "inset" : ""}" style=${pos(y)}>${t}</span>`)}
      <slot></slot>
    `;
  }
}

const TIMES: [string, number][] = [
  ["09:10", 149], ["09:20", 217], ["09:30", 288], ["09:40", 399], ["09:50", 479], ["10:00", 540], ["10:10", 603],
  ["10:20", 670], ["10:30", 785], ["10:40", 913], ["10:50", 962], ["11:00", 1022], ["11:10", 1073], ["11:20", 1111],
  ["11:40", 1169], ["12:00", 1237], ["12:10", 1268], ["12:20", 1312], ["12:40", 1363], ["13:00", 1399], ["13:50", 1535],
  ["14:00", 1566], ["14:10", 1619], ["14:30", 1683], ["14:50", 1735], ["15:00", 1767], ["15:10", 1809], ["", 1853],
];

const TITLE = [
  "[0601]", "주식종합차트", "-", "유통비율[55.7]", "거래대금[4,258(백만)]", "시가총액[1,222(억)]", "주식수[9,080(천)]",
  "유통수[5,058(천)]", "EPS[1,165]", "PBR[2.01]", "배당수익률[1.6]", "PER[11.56]", "ROA[16.4]", "유보율[1,185.0]",
  "부채비율[22.0]", "영업이익률[19.8]", "외국인보유[2,210(천)]",
];

const ico = (body: unknown, w = 16) => html`<svg class="ico" width=${w} height="16" viewBox="0 0 16 16" aria-hidden="true">${body}</svg>`;

const WINDOW_ICONS: [string, unknown][] = [
  ["연결", svg`<path d="M1.5 5.5h7v8h-7zM6.500 5V1.500h8v7H9"></path>`],
  ["숨기기", svg`<path d="M2.500 11.500h11v2h-11z"></path>`],
  ["복사", svg`<path d="M5.500 1.500h9v8h-9zM4 4.500H1.500v9h9V11"></path>`],
  ["고정", svg`<path class="solid" d="M4 1h8v2h-1v4l2 2v1H8.500v5h-1v-5H3V9l2-2V3H4z"></path>`],
  ["글꼴", svg`<path class="solid" d="M2 1h12v4h-1l-1-2H9.500v10l2 .5V15h-7v-1.500l2-.5V3H4L3 5H2z"></path>`],
  ["도움말", svg`<path class="bold" d="M4 5c0-5 8-5 8-1 0 3-4 3-4 6M8 12v2"></path>`],
];
const FRAME_ICONS: [string, unknown][] = [
  ["최소화", svg`<path class="solid" d="M3 11h10v3H3z"></path>`],
  ["이전 크기", svg`<path d="M2.500 7.500h8v6h-8zM2 8.500h9M5.500 7V3.500h8v6H11M5 4.500h9"></path>`],
  ["닫기", svg`<path d="M3 4l10 10M13 4L3 14"></path>`],
];
const TOOL_ICONS: [string, unknown][] = [
  ["차트 추가", svg`<path class="solid" d="M1 3h5v6H1zM3 1h1v10H3z"></path><path class="pale" d="M7 3h5v5H7zM9 1h1v9H9z"></path><path class="bold" d="M9 13h7M12.500 10v6"></path>`],
  ["지표 추가", svg`<path d="M1 6l4-4 4 4 5-5M1 1l4 5 4-4 5 4"></path><path class="bold" d="M8 12h7M11.500 9v7"></path>`],
  ["저장", svg`<path class="soft" d="M2 2h10l2 2v10H2z"></path><path d="M4.500 2v5h7V2M4.500 14v-4h7v4M9.500 3v2"></path>`],
  ["설정", svg`<circle class="gear" cx="8" cy="8" r="4"></circle><path class="teeth" d="M8 1v3M8 12v3M1 8h3M12 8h3M3 3l2 2M11 11l2 2M13 3l-2 2M5 11l-2 2"></path>`],
];
const FOOT_ICONS: [string, unknown][] = [
  ["창 추가", svg`<path d="M1.500 1.500h10v11h-10z"></path><path class="paper" d="M6.500 7.500h9v8h-9z"></path><path d="M11 9v5M8.500 11.500h5"></path>`],
  ["창 분할", svg`<path d="M1.500 2.500h9v8h-9zM2 3.500h8"></path><path class="paper" d="M6.500 7.500h9v7h-9zM7 8.500h8"></path>`],
  ["범위", svg`<path class="dash" d="M1 2.500h14M1 13.500h14"></path><path d="M1 10l4-4 3 4 6-5M12 5h2v2"></path>`],
  ["추세", svg`<path class="press" d="M0 0h16v16H0z"></path><path d="M1 4.500h14M3.500 1v14M4 5l6 6M10 7v4H6"></path>`],
  ["수평선", svg`<path d="M1 3.500h14M1 14l5-8 3 4 4-6"></path>`],
  ["수직선", svg`<path d="M4.500 1v14M1 13l3-4 3 3 4-6 4 3"></path>`],
  ["그리기", svg`<path class="bold" d="M4 12L14 2"></path><path d="M1 13l4-2 3 2 4-4 3 4"></path>`],
  ["지우개", svg`<path d="M1 9l6-7 5 2-5 8zM1 9v3l5 3 1-3M12 4v3l-5 7"></path><path d="M9.500 11v4M11.500 9v6M13.500 10v5"></path>`],
  ["겹쳐보기", svg`<path d="M4.500 1.500h11v8h-11zM1.500 6.500h11v8h-11zM3 12l3-3 2 2 4-3M6 5l3-2 2 1 3-2"></path>`],
  ["돋보기", svg`<circle cx="6.500" cy="6.500" r="5"></circle><path class="bold" d="M10 10l5 5"></path>`],
  ["축소", svg`<path class="bold" d="M3 8h10"></path>`],
  ["확대", svg`<path class="bold" d="M2 8h12M8 2v12"></path>`],
];

@customElement("app-root")
export class AppRoot extends LitElement {
  static styles = css`
    :host {
      display: flex; flex-direction: column; height: 100vh; box-sizing: border-box; overflow: hidden;
      padding: 1px 3px 4px 3px; background: #000; color: #000;
      font-family: "Liberation Sans", "Noto Sans CJK KR", sans-serif; font-size: 12px; line-height: 16px;
    }
    button, input, select { font: inherit; color: inherit; margin: 0; box-sizing: border-box; }
    button { padding: 0; cursor: default; }
    .ico { display: block; flex: none; fill: none; stroke: currentColor; stroke-width: 1; }
    .solid { fill: currentColor; stroke: none; }
    .pale { fill: #a0a0a0; stroke: none; }
    .soft { fill: #b8b8b8; }
    .bold { stroke-width: 2; }
    .gear { stroke-width: 3; }
    .teeth { stroke-width: 2; }
    .paper { fill: #f4f4f4; }
    .press { fill: #fff; stroke: none; }
    .dash { stroke-dasharray: 2 2; }

    .title { display: flex; align-items: center; height: 24px; flex: none; background: #3a5795; color: #fff; padding: 0 2px 0 1px; gap: 6px; }
    .title h1 { flex: 1; min-width: 0; margin: 0; font-size: 13px; font-weight: 400; display: flex; gap: 8px; white-space: nowrap; overflow: hidden; }
    .num { width: 12px; height: 14px; line-height: 14px; text-align: center; font-weight: 700; border: 1px solid #b9cbee; border-radius: 2px; background: #5573b4; }
    .wins { display: flex; gap: 2px; color: #a9b8dc; align-items: center; }
    .wins button { width: 17px; height: 16px; border: 0; background: none; color: inherit; }
    .wins hr { width: 1px; height: 14px; border: 0; margin: 0 2px 0 0; background: #6d83b5; }

    .body { flex: 1; min-height: 0; display: flex; flex-direction: column; background: #d0d0d0; border: 0 solid #e8e8e8; border-width: 0 3px 3px; }
    .tools { display: flex; align-items: center; height: 21px; flex: none; padding-top: 5px; gap: 1px; }
    .grp { display: flex; height: 21px; box-sizing: border-box; border: 1px solid #8c8c8c; background: #eee; }
    .grp button { width: 19px; border: 0; border-right: 1px solid #a8a8a8; background: #eee; display: flex; align-items: center; justify-content: center; }
    .grp button:last-child { border-right: 0; width: 18px; }
    .grp.ko { font-size: 13px; }
    .grp button.on { background: #4c83c8; color: #fff; }
    .grp button.drop { width: 14px; font-size: 10px; color: #444; }
    .grp.sound button { width: 17px; }
    .grp.sound button.drop { width: 10px; font-size: 8px; }
    .grp input, .grp select { border: 0; background: #fff; padding: 0 2px; height: 19px; border-radius: 0; appearance: none; outline: 0; }
    .code { width: 52px; }
    .gray { color: #888; width: 17px; }
    .one { width: 23px; text-align: center; }
    .cnt { width: 32px; }
    .grp .tag { background: #00665e; color: #fff; width: 17px; line-height: 19px; text-align: center; }
    .grp .name { color: #80003c; background: linear-gradient(135deg, transparent 50%, #aaa 50%) right bottom / 8px 8px no-repeat #fff; width: 60px; padding-left: 2px; line-height: 18px; }
    .total { color: #333; line-height: 21px; }
    .tools .ico { color: #444; }
    .tools input[type="checkbox"] { appearance: none; width: 13px; height: 13px; border: 1px solid #777; background: #fff; }
    .tools label { display: flex; align-items: center; gap: 3px; }

    .quotes { display: flex; flex: none; height: 21px; gap: 2px; padding: 2px 0; }
    .quotes dl { display: flex; margin: 0; border: 1px solid #8c8c8c; background: #f0f0f0; line-height: 19px; height: 19px; width: 748px; }
    .quotes .cell { display: grid; align-items: center; border-right: 1px solid #b4b4b4; padding-right: 2px; white-space: nowrap; }
    .quotes .cell:last-child { border-right: 0; }
    .quotes dt, .quotes dd { margin: 0; text-align: right; }
    .quotes dt { text-align: left; font-size: 13px; }
    .c1 { grid-template-columns: 74px 47px 47px; }
    .c2 { grid-template-columns: 69px 58px 40px; }
    .c3 { grid-template-columns: 79px; }
    .c4 { grid-template-columns: 37px 46px 51px; padding-left: 2px; }
    .c5 { grid-template-columns: 16px 38px 24px 38px 24px 38px; padding-left: 1px; }
    .c5 dt { padding-left: 5px; }
    .c5 dt:first-child { padding-left: 0; }
    .r { color: #e81e0c; }
    .b { color: #1648c0; }
    .quotes button { width: 40px; height: 21px; border: 1px solid #8c8c8c; font-size: 13px; }
    .buy { background: #f5d0ca; }
    .sell { background: #c4dcf4; }

    .board { flex: 1; min-height: 0; display: grid; grid-template-columns: 41px minmax(0, 1fr) 47px; grid-template-rows: minmax(0, 805fr) minmax(0, 155fr) 17px; gap: 1px; padding: 1px; background: #909090; }
    .layout { position: absolute; left: 4px; top: 19px; width: 12px; height: 12px; border: 1px solid #000; background: #fff; color: #444; display: flex; align-items: center; }
    .flag { position: absolute; line-height: 13px; background: #e81e0c; color: #fff; padding: 0 2px; top: 31.2%; }
    .sub { position: absolute; line-height: 13px; color: #e81e0c; top: 33%; }
    .left-pos { left: 3px; width: 30px; }
    .left-sub { right: 1px; }
    .left-sub b { color: #444; font-weight: 400; }
    .right-pos { left: 3px; width: 38px; }
    .right-sub { left: 6px; }
    .box { position: absolute; top: 56.4%; left: 0; right: 0; border: 1px solid #000; background: #ffdf70; line-height: 13px; height: 26px; text-align: center; color: #444; }
    .box em { display: block; font-style: normal; color: #ff0000; }
    .box.rt { left: 3px; right: 1px; }
    .lc { position: absolute; left: 0; top: 0; line-height: 12px; white-space: nowrap; color: #e81e0c; }
    .lc span { display: block; color: #115ccb; }
    .shut { position: absolute; right: 2px; top: 4px; width: 8px; height: 7px; border: 0; background: #333; color: #fff; font-size: 8px; line-height: 7px; }
    .times { position: relative; background: #fff; overflow: hidden; color: #444; }
    .times span { position: absolute; top: 0; bottom: 0; border-left: 1px solid #909090; padding-left: 1px; line-height: 15px; }
    .times .day { border: 0; left: 0; font-weight: 700; }
    .times .now { left: 74.9%; background: #ffdf70; border: 1px solid #000; padding: 0 1px; line-height: 14px; white-space: nowrap; min-width: 131px; }
    .corner { background: #fff; color: #444; line-height: 15px; overflow: hidden; }
    .corner.end { padding-left: 6px; }

    .foot { display: flex; align-items: center; flex: none; height: 17px; background: #f0f0f0; }
    .foot button { width: 16px; height: 16px; border: 1px solid #707070; border-top-color: #fff; border-left-color: #fff; background: #f0f0f0; display: flex; align-items: center; justify-content: center; margin-right: 1px; }
    .track { flex: 1; height: 16px; background: repeating-conic-gradient(#fff 0 25%, #ececec 0 50%) 0 0 / 2px 2px; display: flex; justify-content: flex-end; }
    .thumb { width: 46.2%; box-sizing: border-box; border: 1px solid #fff; border-right-color: #707070; border-bottom: 2px solid #707070; background: #f0f0f0; }
    .zoom { width: 70px; height: 15px; margin: 0 6px 0 5px; appearance: none; background: linear-gradient(#808080, #808080) 0 5px / 100% 1px no-repeat, repeating-linear-gradient(90deg, #000 0 1px, transparent 1px 7px) 0 100% / 100% 3px no-repeat; }
    .zoom::-webkit-slider-thumb { appearance: none; width: 4px; height: 11px; margin-bottom: 4px; border: 1px solid #707070; background: #f0f0f0; }
    .foot .acts { display: flex; gap: 1px; color: #555; }
    .foot .acts button { border: 0; margin: 0; font-weight: 700; font-size: 15px; }
  `;

  private icons(list: [string, unknown][]) {
    return list.map(([name, body]) => html`<button type="button" aria-label=${name}>${ico(body, 14)}</button>`);
  }

  render() {
    return html`
      <header class="title">
        <span class="num">1</span>
        <h1>${TITLE.map((t) => html`<span>${t}</span>`)}</h1>
        <div class="wins">${this.icons(WINDOW_ICONS)}<hr />${this.icons(FRAME_ICONS)}</div>
      </header>
      <main class="body">
        <div class="tools">
          <div class="grp"><button type="button" aria-label="패널">${ico(svg`<path d="M4.500 2.500h9v11h-9zM5 4.500h8M1.500 2v12"></path><path class="solid" d="M6 5v7L2 8.500z"></path>`, 14)}</button></div>
          <div class="grp ko"><input class="gray" value="주" aria-label="시장" /><button type="button" class="drop" aria-label="시장 선택">▼</button></div>
          <div class="grp ko"><button type="button">전</button></div>
          <div class="grp"><input class="code" value="263860" aria-label="종목코드" /><button type="button" class="drop" aria-label="종목 목록">▼</button><button type="button" aria-label="검색">${ico(svg`<circle cx="6.500" cy="6.500" r="4.500"></circle><path class="bold" d="M10 10l4 5"></path>`, 14)}</button></div>
          <div class="grp sound"><button type="button" aria-label="소리">${ico(svg`<path class="solid" d="M1 6h3l4-4v12L4 10H1z"></path><path d="M10.500 5v2M10.500 9v2M13.500 5v2M13.500 9v2"></path>`, 14)}</button><button type="button" class="drop" aria-label="소리 선택">▼</button></div>
          <div class="grp ko"><span class="tag">신</span><span class="name">지니언스</span></div>
          <div class="grp ko">${["일", "주", "월", "년"].map((t) => html`<button type="button">${t}</button>`)}</div>
          <div class="grp ko">${["분", "초", "틱"].map((t) => html`<button type="button" class=${t === "초" ? "on" : ""}>${t}</button>`)}</div>
          <div class="grp">${["1", "3", "5", "10", "15", "30", "45", "60"].map((t) => html`<button type="button" class=${t === "5" ? "on" : ""}>${t}</button>`)}</div>
          <div class="grp"><input class="one" value="5" aria-label="주기" /><button type="button" class="drop" aria-label="주기 선택">▼</button></div>
          <div class="grp"><input class="cnt" value="1663" aria-label="조회 개수" /></div>
          <span class="total">/3600</span>
          <div class="grp">${this.icons(TOOL_ICONS)}</div>
          <label><input type="checkbox" />D</label>
        </div>
        <div class="quotes">
          <dl>
            <div class="cell c1"><dd class="r">13,460▲</dd><dd class="r">590</dd><dd class="r">+4.58%</dd></div>
            <div class="cell c2"><dd>318,480</dd><dd class="b">21.09%</dd><dd>3.51%</dd></div>
            <div class="cell c3"><dd>4,258백만</dd></div>
            <div class="cell c4"><dt>최우선</dt><dd class="r">13,480</dd><dd class="r">13,460</dd></div>
            <div class="cell c5"><dt>시</dt><dd class="b">12,640</dd><dt>고</dt><dd class="r">13,860</dd><dt>저</dt><dd class="b">12,560</dd></div>
          </dl>
          <button type="button" class="buy">매수</button>
          <button type="button" class="sell">매도</button>
        </div>
        <section class="board">
          <value-axis .labels=${LEFT_PRICES}>
            <span class="layout">${ico(svg`<path d="M2.500 2.500h11v11h-11zM2 5.500h12M6.500 3v10M10.500 3v10"></path>`, 12)}</span>
            <span class="flag left-pos">3,460</span>
            <span class="sub left-sub">,58%<b>9</b></span>
            <span class="box">13,087<em>+1,69%</em></span>
          </value-axis>
          <price-chart></price-chart>
          <value-axis right .labels=${RIGHT_RATES} .minor=${18.7}>
            <span class="lc">LC:7,17<span>HC:-2,89</span></span>
            <span class="flag right-pos">13,460</span>
            <span class="sub right-sub">4,58%</span>
            <span class="box rt">13,087<em>+1,69%</em></span>
          </value-axis>
          <value-axis .labels=${LEFT_LOWER} .top=${883} .span=${155} .minor=${6.7}></value-axis>
          <volume-chart></volume-chart>
          <value-axis right .labels=${RIGHT_LOWER} .top=${883} .span=${155} .minor=${6}>
            <button type="button" class="shut" aria-label="지표 닫기">×</button>
          </value-axis>
          <div class="corner"></div>
          <div class="times">
            <span class="day">04/02</span>
            ${TIMES.map(([t, x]) => html`<span style=${`left:${((x - 49) / 1816) * 100}%`}>${t}</span>`)}
            <span class="now">2025/04/03(목) 13:34:35</span>
          </div>
          <div class="corner end">15:30:2</div>
        </section>
        <footer class="foot">
          <button type="button" aria-label="왼쪽">${ico(svg`<path class="solid" d="M10 3v10L5 8z"></path>`, 14)}</button>
          <div class="track"><div class="thumb"></div></div>
          <button type="button" aria-label="재생">${ico(svg`<path class="solid" d="M6 3v10l5-5z"></path>`, 14)}</button>
          <button type="button" aria-label="뒤로">${ico(svg`<path class="solid" d="M8 3v10L3 8zM13 3v10L8 8z"></path>`, 14)}</button>
          <button type="button" aria-label="정지">${ico(svg`<path class="solid" d="M4 3h8v10H4z"></path>`, 14)}</button>
          <button type="button" aria-label="앞으로">${ico(svg`<path class="solid" d="M3 3v10l5-5zM8 3v10l5-5z"></path>`, 14)}</button>
          <input class="zoom" type="range" min="0" max="9" value="4" aria-label="확대 비율" />
          <div class="acts">${this.icons(FOOT_ICONS)}<button type="button">A</button></div>
        </footer>
      </main>
    `;
  }
}
